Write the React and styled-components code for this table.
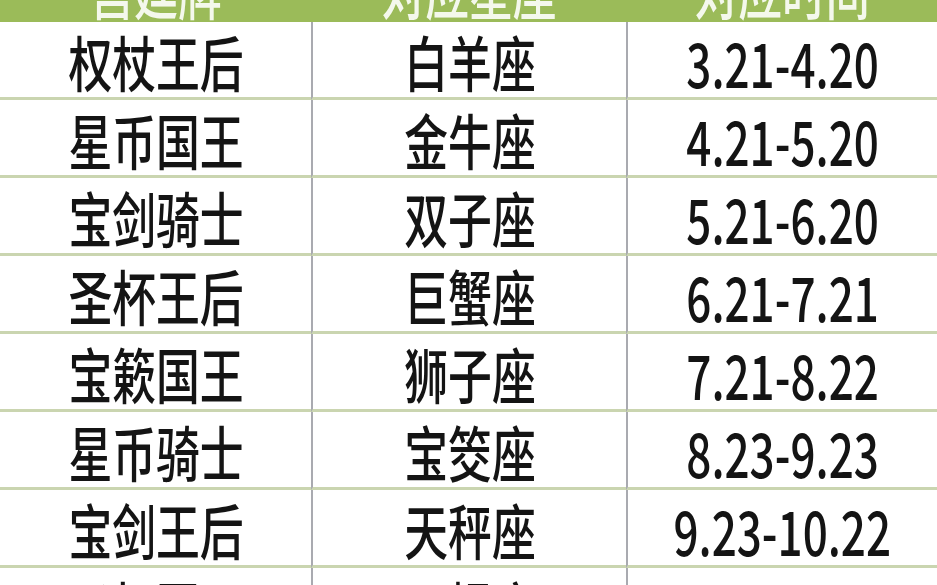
import React from "react";
import styled, { createGlobalStyle } from "styled-components";

const Global = createGlobalStyle`
  html, body { margin: 0; padding: 0; background: #fff; }
  body { width: 937px; height: 585px; overflow: hidden; font-family: "Noto Sans CJK SC", "Noto Sans", sans-serif; }
`;

const Frame = styled.div`
  width: 937px;
  height: 585px;
  overflow: hidden;
  background: #fff;
`;

const Table = styled.div`
  margin-top: -54px;
  display: grid;
  grid-template-columns: 311px 315px minmax(0, 1fr);
`;

const HeadCell = styled.div`
  height: 76px;
  min-width: 0;
  background: #9bbb59;
  color: #f4f8ec;
  display: flex;
  align-items: center;
  justify-content: center;
  padding-top: 10px;
  box-sizing: border-box;
  font-weight: 700;
`;

const Cell = styled.div`
  height: 78px;
  min-width: 0;
  box-sizing: border-box;
  border-bottom: 3px solid #cad5b0;
  border-left: ${(p) => (p.$first ? "none" : "2px solid #a9aab0")};
  display: flex;
  align-items: center;
  justify-content: center;
  padding-top: 2px;
  color: #141414;
`;

const Label = styled.span`
  display: inline-block;
  font-size: 60px;
  font-weight: 500;
  line-height: 1;
  white-space: nowrap;
  transform: scaleX(0.73);
`;

const Num = styled.span`
  display: inline-block;
  flex-shrink: 0;
  font-size: 62px;
  font-weight: 500;
  line-height: 1;
  white-space: nowrap;
  transform: scaleX(0.71);
  font-family: "Noto Sans CJK SC", "Noto Sans", sans-serif;
`;

const rows = [
  ["权杖王后", "白羊座", "3.21-4.20"],
  ["星币国王", "金牛座", "4.21-5.20"],
  ["宝剑骑士", "双子座", "5.21-6.20"],
  ["圣杯王后", "巨蟹座", "6.21-7.21"],
  ["宝簌国王", "狮子座", "7.21-8.22"],
  ["星币骑士", "宝筊座", "8.23-9.23"],
  ["宝剑王后", "天秤座", "9.23-10.22"],
  ["圣杯国王", "天蝎座", "10.23-11.22"],
];

export default function App() {
  return (
    <Frame>
      <Global />
      <Table>
        <HeadCell><Label>宫廷牌</Label></HeadCell>
        <HeadCell><Label>对应星座</Label></HeadCell>
        <HeadCell><Label>对应时间</Label></HeadCell>
        {rows.map((r) => (
          <React.Fragment key={r[0] + r[2]}>
            <Cell $first><Label>{r[0]}</Label></Cell>
            <Cell><Label>{r[1]}</Label></Cell>
            <Cell><Num>{r[2]}</Num></Cell>
          </React.Fragment>
        ))}
      </Table>
    </Frame>
  );
}
